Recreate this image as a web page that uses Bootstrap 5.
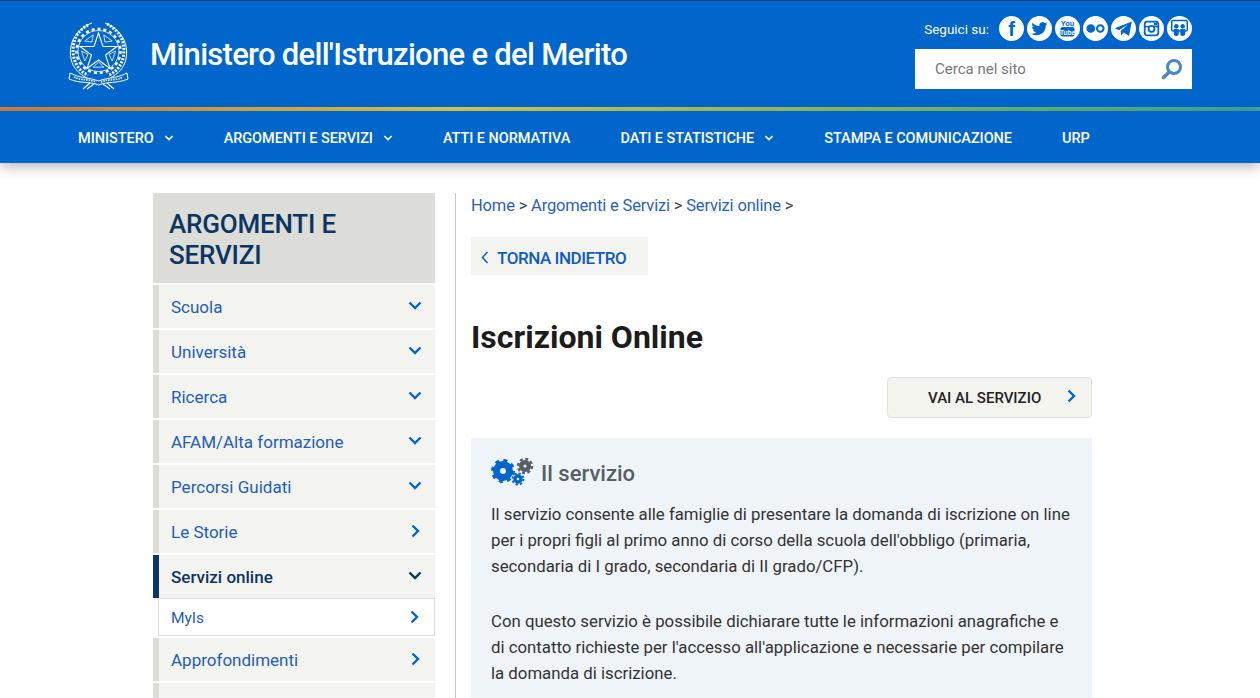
<!DOCTYPE html>
<html lang="it">
<head>
  <meta charset="UTF-8">
  <title>Iscrizioni Online - Ministero dell'Istruzione e del Merito</title>
  <link href="https://cdn.jsdelivr.net/npm/bootstrap@5.3.2/dist/css/bootstrap.min.css" rel="stylesheet">
  <style>
    html, body { height: 100%; overflow: hidden; }
    body { font-family: Roboto, "Liberation Sans", sans-serif; color: #2b2b2b; background: #fff; }
    a { text-decoration: none; }

    .site-head { background: #0066cc; border-top: 1px solid #0a3f80; height: 107px; padding: 0 68px; }
    .emblem { width: 61px; height: 69px; margin-top: 20px; }
    .site-name { font-size: 31px; font-weight: 500; letter-spacing: -.71px; color: #fff; margin: 0 0 0 21px; line-height: 1; padding-top: 38px; }
    .head-tools { width: 277px; margin-right: 0; padding-top: 15px; }
    .follow-label { font-size: 13.5px; color: #fff; margin-right: 10px; padding-top: 2px; }
    .soc { width: 25px; height: 25px; display: block; }
    .soc-row { gap: 3px; }
    .search-box { height: 40px; background: #fff; margin-top: 8px; padding: 0 9px 0 20px; }
    .search-box .form-control { border: 0; padding: 0; border-radius: 0; font-size: 15px; color: #777; box-shadow: none; background: transparent; }
    .search-box .form-control::placeholder { color: #787878; opacity: 1; }

    .color-line { height: 4px; background: linear-gradient(90deg, #cf7f3d 0, #dcc94a 36%, #6fb66a 78%, #3fa59a 100%); }

    .main-nav { background: #0066cc; height: 52px; padding: 4px 78px 0; box-shadow: 0 4px 12px rgba(0,0,0,.28); position: relative; }
    .main-nav .nav-link { color: #fff; font-size: 14.5px; font-weight: 500; letter-spacing: -.05px; padding: 0; margin-right: 50px; display: flex; align-items: center; white-space: nowrap; }
    .nav-chev { width: 10px; height: 6px; margin: -3px 0 0 10px; }

    .page-wrap { padding: 30px 0 0 153px; width: 1092px; }
    .side-col { width: 282px; flex: none; }
    .side-title { background: #dcdcd8; color: #0b3563; font-size: 26px; font-weight: 500; letter-spacing: -.2px; line-height: 31px; padding: 16px 16px 12px; height: 90px; margin: 0 0 2px; }
    .side-list { border-radius: 0; }
    .side-list .list-group-item { background: #f3f3ef; border: 0; border-left: 6px solid #dcdcd8; border-radius: 0; height: 43px; margin-bottom: 2px; padding: 2px 13px 0 12px; font-size: 17px; color: #1f5eb5; }
    .side-list .list-group-item.is-open { border-left-color: #0b3563; color: #0b3563; font-weight: 500; margin-bottom: 0; }
    .side-list .list-group-item.sub-item { background: #fff; border: 1px solid #dedede; border-left-width: 1px; margin: 0 0 2px 5px; height: 38px; font-size: 15.5px; padding: 3px 13px 0 12px; }
    .side-chev { width: 14px; height: 9px; margin-top: -4px; color: #0066cc; }
    .side-chev-r { width: 9px; height: 14px; margin: -4px 2px 0 0; color: #0066cc; }
    .is-open .side-chev { color: #0b3563; }

    .main-col { border-left: 1px solid #c9c9c9; margin-left: 20px; padding-left: 15px; flex: 1; height: 600px; }
    .crumbs { font-size: 16.5px; letter-spacing: -.17px; margin: 0; padding: 1px 0 0; line-height: 24px; color: #444; }
    .crumbs a { color: #2a62b8; }
    .back-btn { background: #f3f3ef; color: #0f5cc0; border: 0; border-radius: 0; width: 177px; height: 38px; margin-top: 19px; padding: 6px 0 0 10px; font-size: 17px; font-weight: 500; letter-spacing: -.45px; }
    .back-chev { width: 8px; height: 13px; margin: -3px 8px 0 0; }
    .page-title { font-size: 32px; font-weight: 700; color: #1c1c1c; line-height: 38px; margin: 43px 0 21px; }
    .go-btn { background: #f4f4ef; border: 1px solid #e1e1d9; border-radius: 4px; color: #222; width: 205px; height: 41px; font-size: 15px; font-weight: 500; padding: 1px 13px 0 40px; }
    .info-box { background: #eef4f8; border: 0; border-radius: 0; margin-top: 20px; padding: 18px 19px 0 20px; }
    .info-title { font-size: 22px; font-weight: 500; color: #565f67; margin: 0 0 9px; line-height: 36px; }
    .gears { width: 44px; height: 28px; margin: -4px 7px 0 -1px; }
    .info-box p { font-size: 16.8px; line-height: 26px; margin: 0 0 29px; color: #333; }
  </style>
</head>
<body>
  <svg width="0" height="0" class="position-absolute">
    <symbol id="chev-down" viewBox="0 0 14 9"><polyline points="1.5,1.5 7,7 12.5,1.5" fill="none" stroke="currentColor" stroke-width="2.4"/></symbol>
    <symbol id="chev-right" viewBox="0 0 9 14"><polyline points="1.5,1.5 7,7 1.5,12.5" fill="none" stroke="currentColor" stroke-width="2.4"/></symbol>
  </svg>

  <header class="site-head d-flex justify-content-between">
    <div class="d-flex align-items-start">
      <svg class="emblem" viewBox="0 0 61 69" fill="none" stroke="#fff" stroke-width=".8">
        <path d="M24 2 C8 8 0 22 3 38 C5 47 11 53 19 57" stroke-width="1"/>
        <path d="M37 2 C53 8 61 22 58 38 C56 47 50 53 42 57" stroke-width="1"/>
        <path d="M20 4 C7 11 3 24 6 37 C8 45 13 51 20 54" stroke-width="3" stroke-dasharray="2 1.4"/>
        <path d="M39 3 C54 11 58 24 55 37 C53 45 48 51 41 54" stroke-width="3" stroke-dasharray="2 1.4"/>
        <circle cx="30.500" cy="30" r="20.500"/>
        <circle cx="30.500" cy="30" r="22" stroke-width="2.500" stroke-dasharray="3 3"/>
        <polygon points="30.500,12 35,25.500 49,25.500 37.500,34 42,47.500 30.500,39 19,47.500 23.500,34 12,25.500 26,25.500" fill="#0066cc" stroke-width="1.100"/>
        <polygon points="36.970,21.100 35.750,13.830 44.250,20"/>
        <polygon points="40.960,33.400 47.500,30 44.250,40"/>
        <polygon points="30.500,41 35.750,46.170 25.250,46.170"/>
        <polygon points="20.040,33.400 13.500,30 16.750,40"/>
        <polygon points="24.030,21.100 25.250,13.830 16.750,20"/>
        <path d="M2 52 C14 58 20 56 30.500 60 C41 56 47 58 59 52 L60 58 C48 63 40 60 30.500 64 C21 60 13 63 1 58 Z" fill="#0066cc" stroke-width="1"/>
        <path d="M6 56 C14 60 22 58 28 61 M33 61 C39 58 47 60 55 56" stroke-width="1.600" stroke-dasharray="1.500 1"/>
        <path d="M22 62 L15 68 M39 62 L46 68 M26 63 L19 68 M35 63 L42 68" stroke-width="1.100"/>
      </svg>
      <h1 class="site-name">Ministero dell'Istruzione e del Merito</h1>
    </div>
    <div class="head-tools">
      <div class="d-flex align-items-center justify-content-end">
        <span class="follow-label">Seguici su:</span>
        <div class="d-flex soc-row">
          <a href="#" aria-label="Facebook"><svg class="soc" viewBox="0 0 25 25"><circle cx="12.500" cy="12.500" r="12.500" fill="#fff"/><text x="12.500" y="20" text-anchor="middle" font-family="Liberation Sans" font-weight="700" font-size="20" fill="#0066cc">f</text></svg></a>
          <a href="#" aria-label="Twitter"><svg class="soc" viewBox="0 0 25 25"><circle cx="12.500" cy="12.500" r="12.500" fill="#fff"/><path fill="#0066cc" d="M20.500 7.600c-.6.300-1.200.400-1.900.500.700-.400 1.200-1 1.400-1.800-.6.400-1.300.600-2.100.800a3.300 3.300 0 0 0-5.600 3c-2.700-.100-5.100-1.400-6.700-3.400-.9 1.500-.4 3.400 1 4.400-.5 0-1-.200-1.500-.400 0 1.600 1.100 3 2.600 3.300-.5.100-1 .100-1.500 0 .4 1.300 1.600 2.200 3.100 2.300a6.600 6.600 0 0 1-4.900 1.400 9.300 9.300 0 0 0 14.300-8.300c.7-.4 1.300-1 1.800-1.800z"/></svg></a>
          <a href="#" aria-label="YouTube"><svg class="soc" viewBox="0 0 25 25"><circle cx="12.500" cy="12.500" r="12.500" fill="#fff"/><text x="12.500" y="9.500" text-anchor="middle" font-family="Liberation Sans" font-weight="700" font-size="7.500" fill="#0066cc">You</text><rect x="5.500" y="11" width="14" height="9.500" rx="2" fill="#0066cc"/><text x="12.500" y="18.500" text-anchor="middle" font-family="Liberation Sans" font-weight="700" font-size="6.500" fill="#fff">Tube</text></svg></a>
          <a href="#" aria-label="Flickr"><svg class="soc" viewBox="0 0 25 25"><circle cx="12.500" cy="12.500" r="12.500" fill="#fff"/><circle cx="7.800" cy="12.500" r="4.300" fill="#0066cc"/><circle cx="17.300" cy="12.500" r="3.300" fill="none" stroke="#0066cc" stroke-width="2"/></svg></a>
          <a href="#" aria-label="Telegram"><svg class="soc" viewBox="0 0 25 25"><circle cx="12.500" cy="12.500" r="12.500" fill="#fff"/><path fill="#0066cc" d="M3.800 12.300 20.800 5.600 18 20 12.800 16.500 10.200 19.500 9.700 15 17.200 8.300 7.800 14.200z"/></svg></a>
          <a href="#" aria-label="Instagram"><svg class="soc" viewBox="0 0 25 25"><circle cx="12.500" cy="12.500" r="12.500" fill="#fff"/><rect x="5.700" y="5.700" width="13.600" height="13.600" rx="2.500" fill="none" stroke="#0066cc" stroke-width="1.800"/><circle cx="12.500" cy="12.800" r="3" fill="none" stroke="#0066cc" stroke-width="1.800"/><rect x="5.700" y="9.800" width="4" height="1.500" fill="#0066cc"/><rect x="15.300" y="9.800" width="4" height="1.500" fill="#0066cc"/><rect x="15" y="6.800" width="3" height="2.500" fill="#0066cc"/></svg></a>
          <a href="#" aria-label="SlideShare"><svg class="soc" viewBox="0 0 25 25"><circle cx="12.500" cy="12.500" r="12.500" fill="#fff"/><rect x="4.700" y="4.500" width="15.600" height="10.500" rx="1.500" fill="none" stroke="#0066cc" stroke-width="1.500"/><circle cx="9.300" cy="10.300" r="2.200" fill="#0066cc"/><circle cx="15.700" cy="10.300" r="2.200" fill="#0066cc"/><path fill="#0066cc" d="M6.800 13h5v4.500a2.500 2.500 0 0 1-5 0zM13.200 13h5v4.500a2.500 2.500 0 0 1-5 0z"/></svg></a>
        </div>
      </div>
      <form class="search-box d-flex align-items-center">
        <input class="form-control" type="text" placeholder="Cerca nel sito" aria-label="Cerca nel sito">
        <svg width="22" height="22" viewBox="0 0 22 22" fill="none" stroke="#4a86c8" class="flex-shrink-0"><circle cx="13" cy="9" r="6.500" stroke-width="3"/><path d="M8.300 14 2.500 19.500" stroke-width="3.500" stroke-linecap="round"/></svg>
      </form>
    </div>
  </header>
  <div class="color-line"></div>

  <nav class="main-nav nav align-items-center flex-nowrap">
    <a class="nav-link" href="#">MINISTERO <svg class="nav-chev"><use href="#chev-down"/></svg></a>
    <a class="nav-link" href="#">ARGOMENTI E SERVIZI <svg class="nav-chev"><use href="#chev-down"/></svg></a>
    <a class="nav-link" href="#">ATTI E NORMATIVA</a>
    <a class="nav-link" href="#">DATI E STATISTICHE <svg class="nav-chev"><use href="#chev-down"/></svg></a>
    <a class="nav-link" href="#">STAMPA E COMUNICAZIONE</a>
    <a class="nav-link" href="#">URP</a>
  </nav>

  <div class="page-wrap d-flex">
    <aside class="side-col">
      <h2 class="side-title">ARGOMENTI E SERVIZI</h2>
      <div class="side-list list-group">
        <a href="#" class="list-group-item d-flex align-items-center justify-content-between">Scuola <svg class="side-chev"><use href="#chev-down"/></svg></a>
        <a href="#" class="list-group-item d-flex align-items-center justify-content-between">Università <svg class="side-chev"><use href="#chev-down"/></svg></a>
        <a href="#" class="list-group-item d-flex align-items-center justify-content-between">Ricerca <svg class="side-chev"><use href="#chev-down"/></svg></a>
        <a href="#" class="list-group-item d-flex align-items-center justify-content-between">AFAM/Alta formazione <svg class="side-chev"><use href="#chev-down"/></svg></a>
        <a href="#" class="list-group-item d-flex align-items-center justify-content-between">Percorsi Guidati <svg class="side-chev"><use href="#chev-down"/></svg></a>
        <a href="#" class="list-group-item d-flex align-items-center justify-content-between">Le Storie <svg class="side-chev-r"><use href="#chev-right"/></svg></a>
        <a href="#" class="list-group-item is-open d-flex align-items-center justify-content-between">Servizi online <svg class="side-chev"><use href="#chev-down"/></svg></a>
        <a href="#" class="list-group-item sub-item d-flex align-items-center justify-content-between">MyIs <svg class="side-chev-r"><use href="#chev-right"/></svg></a>
        <a href="#" class="list-group-item d-flex align-items-center justify-content-between">Approfondimenti <svg class="side-chev-r"><use href="#chev-right"/></svg></a>
        <div class="list-group-item"></div>
      </div>
    </aside>

    <main class="main-col">
      <p class="crumbs"><a href="#">Home</a> &gt; <a href="#">Argomenti e Servizi</a> &gt; <a href="#">Servizi online</a> &gt;</p>
      <a href="#" class="back-btn btn d-inline-flex align-items-center"><svg class="back-chev" viewBox="0 0 8 13"><polyline points="6.500,1 1.500,6.500 6.500,12" fill="none" stroke="currentColor" stroke-width="1.500"/></svg>TORNA INDIETRO</a>
      <h2 class="page-title">Iscrizioni Online</h2>
      <div class="d-flex justify-content-end">
        <a href="#" class="go-btn btn d-flex align-items-center justify-content-between">VAI AL SERVIZIO <svg class="side-chev-r"><use href="#chev-right"/></svg></a>
      </div>
      <section class="info-box card">
        <h3 class="info-title d-flex align-items-center">
          <svg class="gears" viewBox="0 0 44 28" fill="none">
            <circle cx="13" cy="13" r="6.500" stroke="#0066cc" stroke-width="7"/>
            <circle cx="13" cy="13" r="10.500" stroke="#0066cc" stroke-width="3" stroke-dasharray="4 4.250"/>
            <circle cx="28" cy="21" r="3" stroke="#0066cc" stroke-width="3.500"/>
            <circle cx="28" cy="21" r="5.500" stroke="#0066cc" stroke-width="2" stroke-dasharray="2.200 2.120"/>
            <circle cx="35" cy="8" r="3.800" stroke="#565f67" stroke-width="4.500"/>
            <circle cx="35" cy="8" r="7" stroke="#565f67" stroke-width="2.500" stroke-dasharray="3 2.500"/>
          </svg>
          Il servizio
        </h3>
        <p>Il servizio consente alle famiglie di presentare la domanda di iscrizione on line per i propri figli al primo anno di corso della scuola dell'obbligo (primaria, secondaria di I grado, secondaria di II grado/CFP).</p>
        <p>Con questo servizio è possibile dichiarare tutte le informazioni anagrafiche e di&nbsp;contatto richieste per l'accesso all'applicazione e necessarie per compilare la domanda di iscrizione.</p>
      </section>
    </main>
  </div>

  <script src="https://cdn.jsdelivr.net/npm/bootstrap@5.3.2/dist/js/bootstrap.bundle.min.js"></script>
</body>
</html>
